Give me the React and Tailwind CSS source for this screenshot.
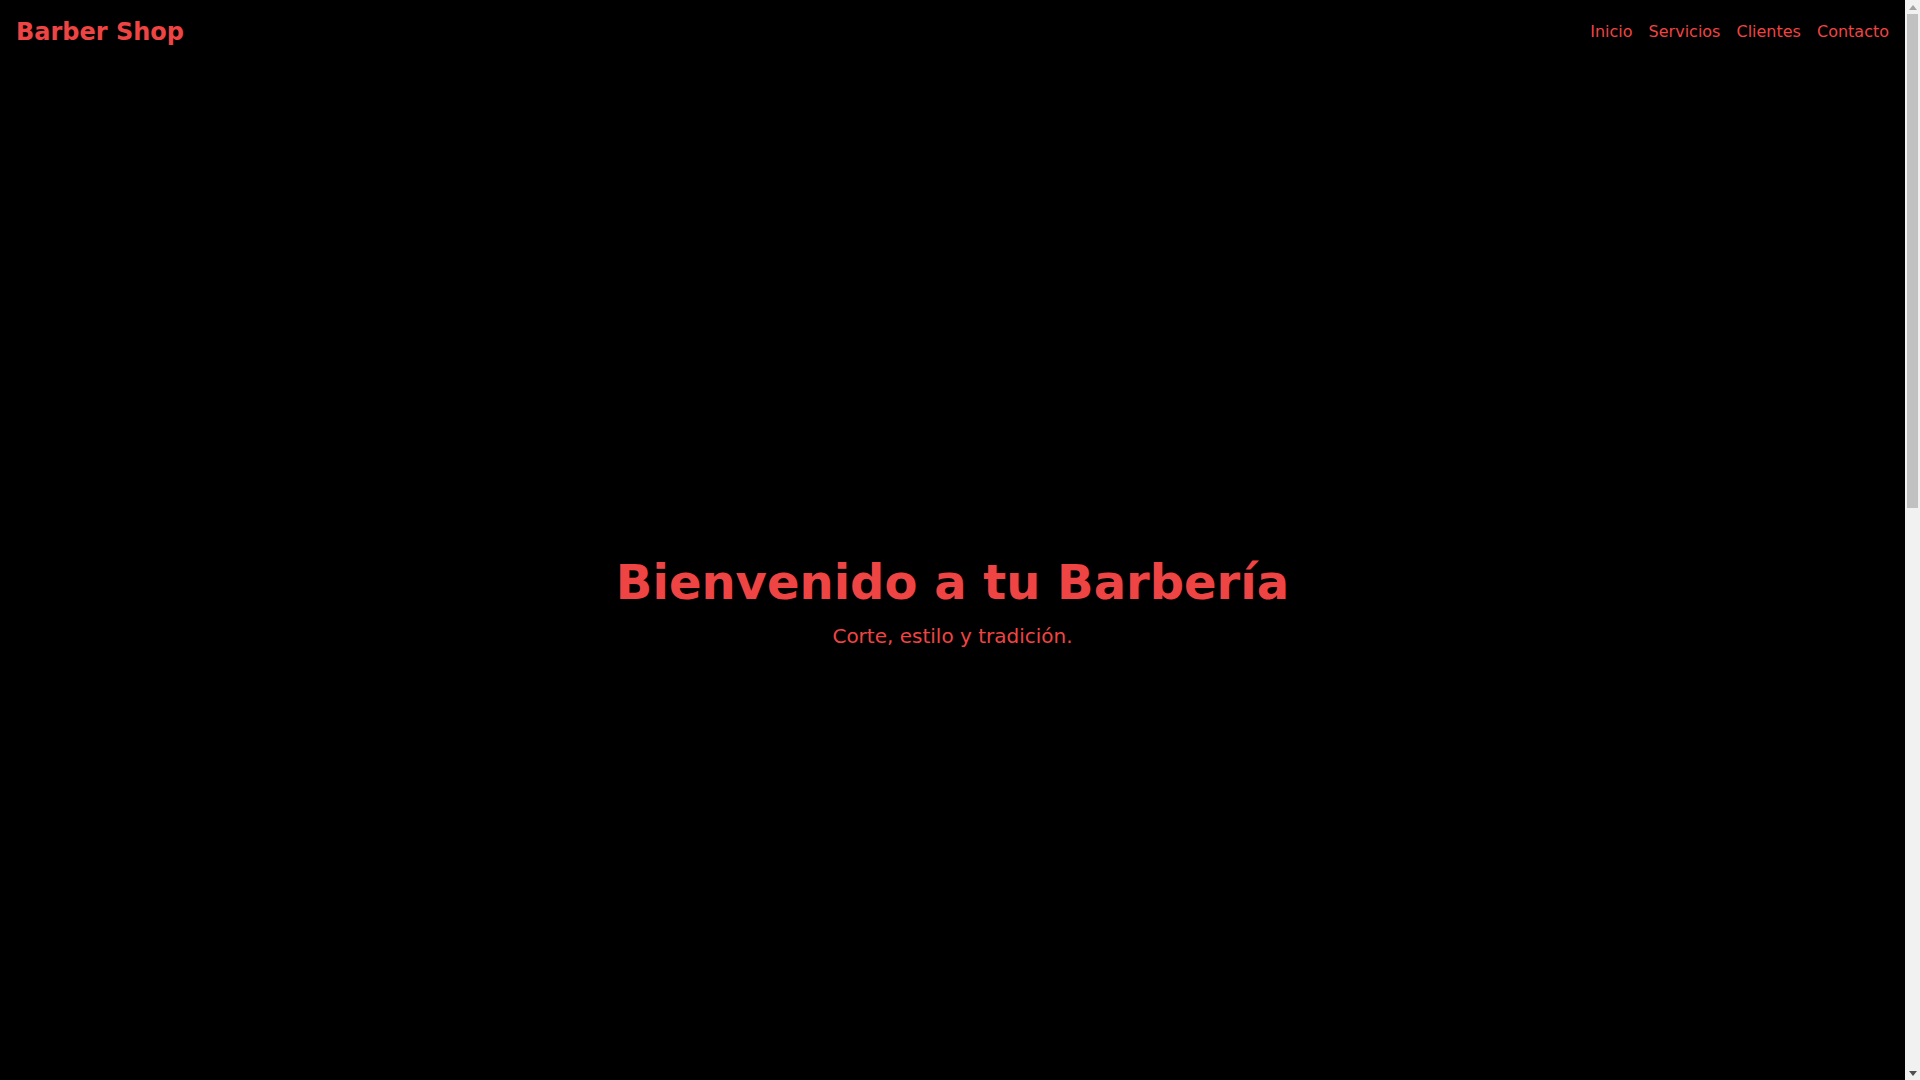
export default function App() {
  return (
    <div className="flex h-screen overflow-hidden bg-black" style={{ fontFamily: '"DejaVu Sans", sans-serif' }}>
      <main className="flex-1 min-w-0 text-[#ef4444]">
        <header className="flex items-center justify-between px-4 py-4 bg-black">
          <h1 className="text-2xl font-bold leading-8">Barber Shop</h1>
          <nav className="flex gap-4 text-base">
            <a href="#inicio">Inicio</a>
            <a href="#servicios">Servicios</a>
            <a href="#clientes">Clientes</a>
            <a href="#contacto">Contacto</a>
          </nav>
        </header>
        <section id="inicio" className="h-screen flex flex-col items-center justify-center text-center">
          <h2 className="text-5xl font-bold">Bienvenido a tu Barbería</h2>
          <p className="mt-4 text-xl">Corte, estilo y tradición.</p>
        </section>
        <section id="servicios" className="h-[385px]"></section>
        <section id="clientes" className="h-[385px]"></section>
        <section id="contacto" className="h-[385px]"></section>
      </main>
      <aside className="w-[15px] shrink-0 h-screen bg-[#f1f1f1] flex flex-col">
        <div className="h-[14px] flex items-center justify-center">
          <svg width="8" height="5" viewBox="0 0 8 5"><polygon points="4,0 8,5 0,5" fill="#a3a3a3" /></svg>
        </div>
        <div className="flex-1 px-[2px]">
          <div className="h-[494px] bg-[#c1c1c1]"></div>
        </div>
        <div className="h-[14px] flex items-center justify-center">
          <svg width="8" height="5" viewBox="0 0 8 5"><polygon points="0,0 8,0 4,5" fill="#505050" /></svg>
        </div>
      </aside>
    </div>
  );
}
